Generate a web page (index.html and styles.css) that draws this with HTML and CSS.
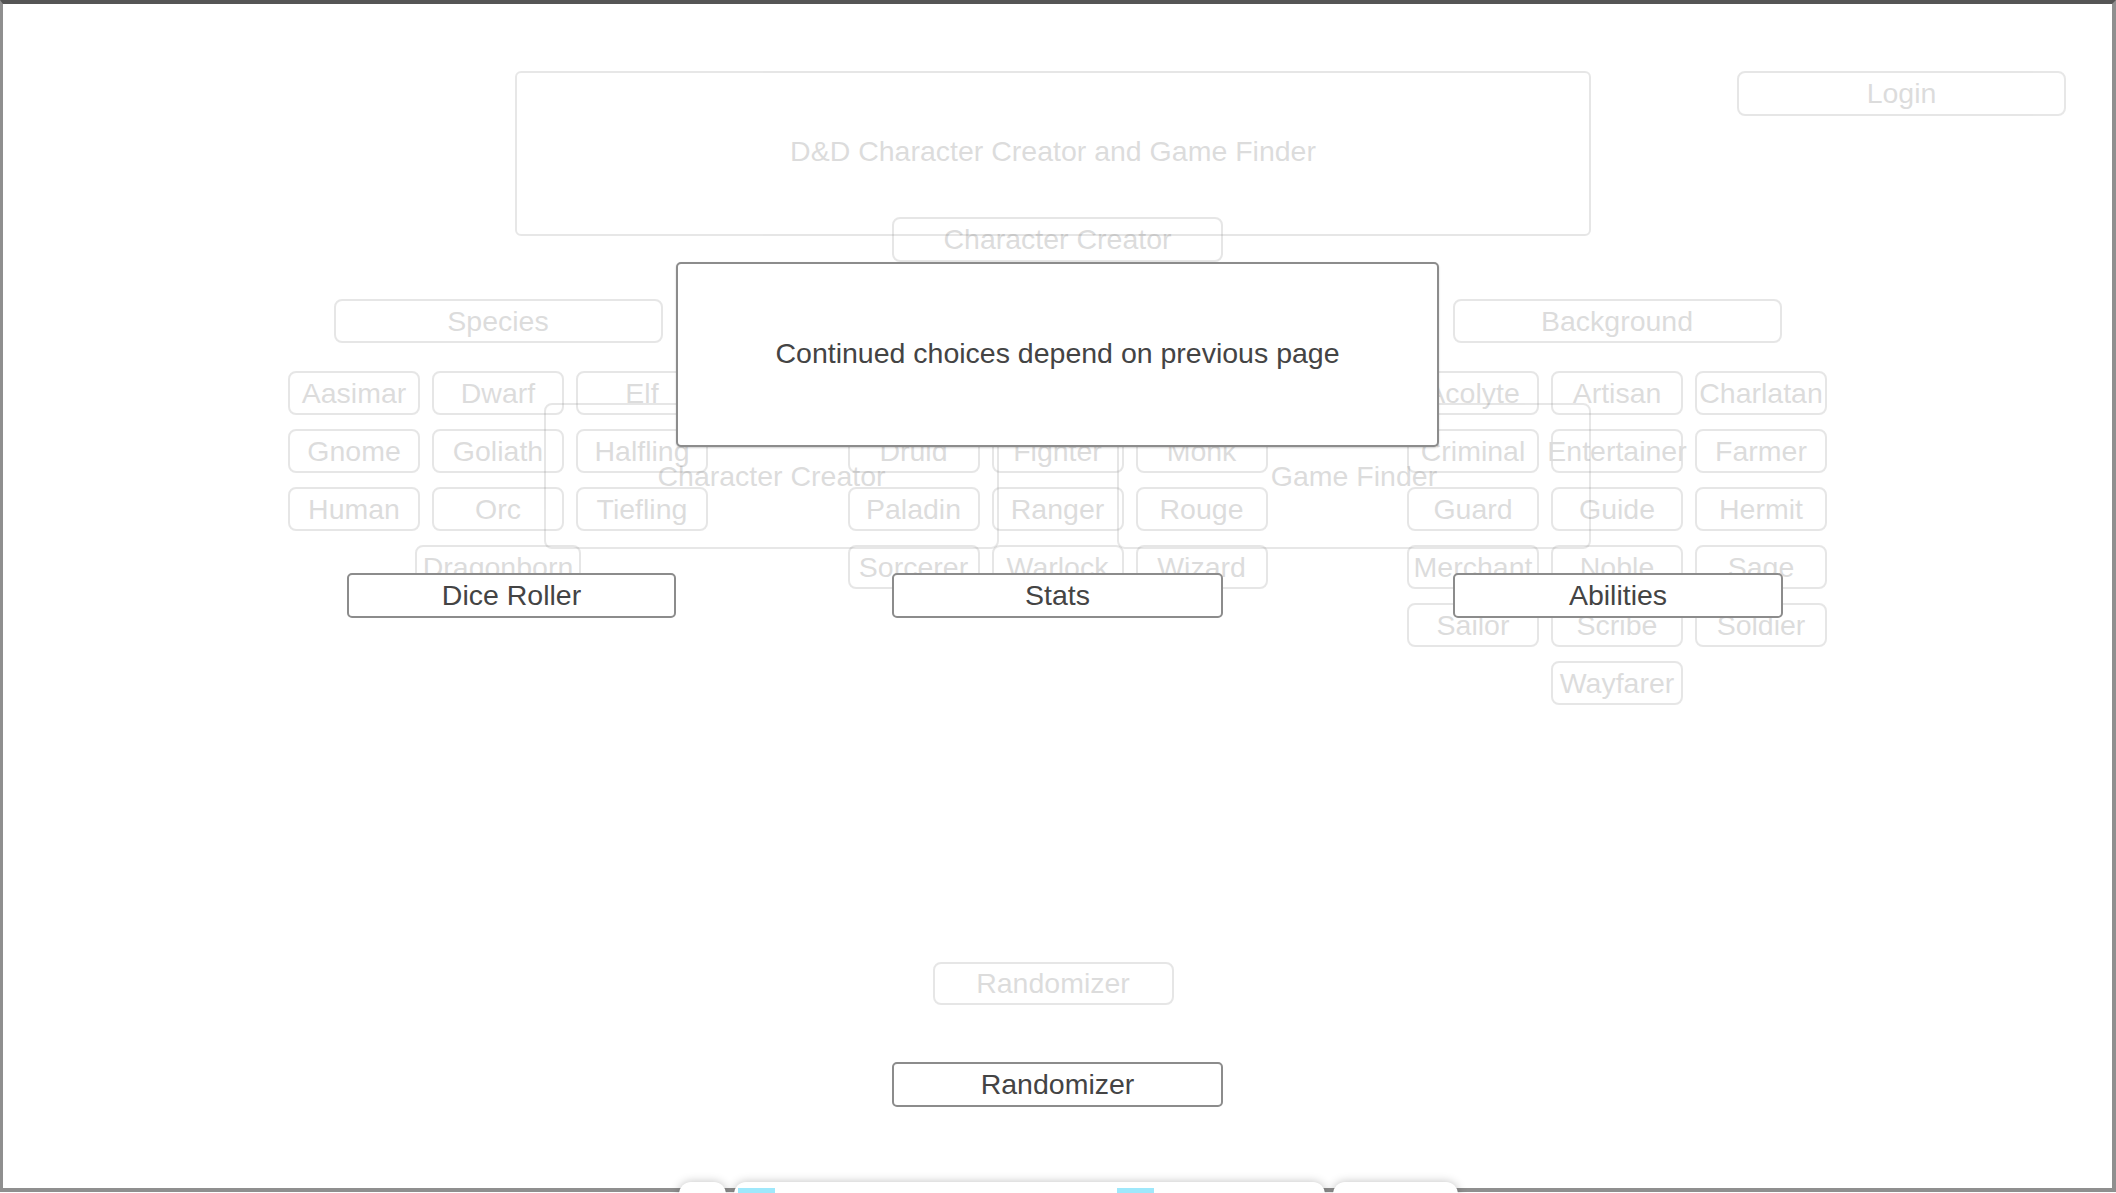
FILE: index.html
```html
<!DOCTYPE html>
<html lang="en">
<head>
    <meta charset="UTF-8">
    <meta name="viewport" content="width=device-width, initial-scale=1.0">
    <title>D&amp;D Character Creator - Continued</title>
    <link rel="stylesheet" href="styles.css">
</head>
<body>

<div class="frame">

    <!-- Ghost of the home page -->
    <div class="layer ghost home">
        <div class="home-top">
            <div class="title-box">D&amp;D Character Creator and Game Finder</div>
            <div class="btn login">Login</div>
        </div>
        <div class="home-nav">
            <div class="nav-card">Character Creator</div>
            <div class="nav-card finder">Game Finder</div>
        </div>
        <div class="btn rand">Randomizer</div>
    </div>

    <!-- Ghost of the first creator page -->
    <div class="layer ghost creator">
        <div class="btn tab">Character Creator</div>
        <div class="columns">
            <section class="col">
                <div class="btn col-head">Species</div>
                <div class="chips">
                    <div class="btn chip">Aasimar</div>
                    <div class="btn chip">Dwarf</div>
                    <div class="btn chip">Elf</div>
                    <div class="btn chip">Gnome</div>
                    <div class="btn chip">Goliath</div>
                    <div class="btn chip">Halfling</div>
                    <div class="btn chip">Human</div>
                    <div class="btn chip">Orc</div>
                    <div class="btn chip">Tiefling</div>
                    <div class="btn chip wide">Dragonborn</div>
                </div>
            </section>
            <section class="col">
                <div class="btn col-head">Class</div>
                <div class="chips">
                    <div class="btn chip">Barbarian</div>
                    <div class="btn chip">Bard</div>
                    <div class="btn chip">Cleric</div>
                    <div class="btn chip">Druid</div>
                    <div class="btn chip">Fighter</div>
                    <div class="btn chip">Monk</div>
                    <div class="btn chip">Paladin</div>
                    <div class="btn chip">Ranger</div>
                    <div class="btn chip">Rouge</div>
                    <div class="btn chip">Sorcerer</div>
                    <div class="btn chip">Warlock</div>
                    <div class="btn chip">Wizard</div>
                </div>
            </section>
            <section class="col">
                <div class="btn col-head">Background</div>
                <div class="chips">
                    <div class="btn chip">Acolyte</div>
                    <div class="btn chip">Artisan</div>
                    <div class="btn chip">Charlatan</div>
                    <div class="btn chip">Criminal</div>
                    <div class="btn chip">Entertainer</div>
                    <div class="btn chip">Farmer</div>
                    <div class="btn chip">Guard</div>
                    <div class="btn chip">Guide</div>
                    <div class="btn chip">Hermit</div>
                    <div class="btn chip">Merchant</div>
                    <div class="btn chip">Noble</div>
                    <div class="btn chip">Sage</div>
                    <div class="btn chip">Sailor</div>
                    <div class="btn chip">Scribe</div>
                    <div class="btn chip">Soldier</div>
                    <div class="btn chip">Wayfarer</div>
                </div>
            </section>
        </div>
    </div>

    <!-- Current page -->
    <div class="layer front">
        <div class="notice">Continued choices depend on previous page</div>
        <div class="front-row">
            <div class="btn tool">Dice Roller</div>
            <div class="btn tool">Stats</div>
            <div class="btn tool abilities">Abilities</div>
        </div>
        <div class="btn tool">Randomizer</div>
    </div>

    <!-- Dock peeking in at the bottom -->
    <div class="dock">
        <div class="dock-item small"></div>
        <div class="dock-item main">
            <span class="dock-sq"></span>
            <span class="dock-sq second"></span>
        </div>
        <div class="dock-item end"></div>
    </div>
</div>

</body>
</html>
```

FILE: styles.css
```css
/* Basic Reset */
* {
    margin: 0;
    padding: 0;
    box-sizing: border-box;
}
html, body {
    width: 2116px;
    height: 1193px;
    overflow: hidden;
    background: #fff;
}
body {
    font-family: "Liberation Sans", Arial, sans-serif;
    font-size: 28.5px;
    color: #555;
}

/* Outer window */
.frame {
    position: relative;
    width: 2116px;
    height: 1192px;
    border: 3px solid #8f8f8f;
    border-top: 4px solid #555;
    border-right-width: 4px;
    border-bottom-width: 4px;
}
.layer {
    position: absolute;
    inset: 0;
    display: flex;
    flex-direction: column;
}
.ghost {
    opacity: 0.2;
}

/* Shared button box */
.btn {
    display: flex;
    justify-content: center;
    align-items: center;
    white-space: nowrap;
    border: 2px solid #888;
    border-radius: 8px;
    line-height: 1;
}

/* Home page ghost */
.home {
    padding: 67px 9px 0 0;
}
.home-top {
    display: grid;
    grid-template-columns: 1fr 1076px 1fr;
    align-items: start;
}
.title-box {
    grid-column: 2;
    height: 165px;
    display: flex;
    justify-content: center;
    align-items: center;
    padding-bottom: 4px;
    border: 2px solid #888;
    border-radius: 6px;
}
.login {
    justify-self: end;
    width: 329px;
    height: 45px;
    margin-right: 37px;
}
.home-nav {
    display: flex;
    gap: 118px;
    margin-top: 167px;
    padding-left: 541px;
}
.nav-card {
    width: 455px;
    height: 146px;
    display: flex;
    justify-content: center;
    align-items: center;
    border: 2px solid #888;
    border-radius: 8px;
}
.nav-card.finder {
    width: 474px;
}
.rand {
    width: 241px;
    height: 43px;
    margin: 413px auto 0;
}

/* Creator page ghost */
.creator {
    align-items: center;
    padding-top: 213px;
}
.tab {
    width: 331px;
    height: 45px;
}
.columns {
    display: flex;
    justify-content: center;
    align-items: flex-start;
    gap: 139.5px;
    margin-top: 37px;
}
.col {
    width: 420px;
    display: flex;
    flex-direction: column;
    align-items: center;
}
.col-head {
    width: 329px;
    height: 44px;
}
.chips {
    display: flex;
    flex-wrap: wrap;
    justify-content: center;
    gap: 14px 12px;
    width: 420px;
    margin-top: 28px;
}
.chip {
    width: 132px;
    height: 44px;
}
.chip.wide {
    width: 166px;
}

/* Current page */
.front {
    align-items: center;
    padding-top: 258px;
    color: #444;
}
.notice {
    width: 763px;
    height: 185px;
    display: flex;
    justify-content: center;
    align-items: center;
    padding-bottom: 2px;
    background: #fff;
    border: 2px solid #8c8c8c;
    border-radius: 5px;
    box-shadow: 0 1px 2px rgba(0, 0, 0, 0.2);
}
.front-row {
    align-self: stretch;
    display: flex;
    gap: 216px;
    margin-top: 126px;
    margin-bottom: 444px;
    padding-left: 344px;
}
.tool {
    width: 331px;
    height: 45px;
    background: #fff;
    border-color: #8c8c8c;
    border-radius: 5px;
}
.front-row .tool:first-child {
    width: 329px;
}
.tool.abilities {
    width: 330px;
    margin-left: 14px;
}

/* Dock */
.dock {
    position: absolute;
    top: 1178px;
    left: 676px;
    display: flex;
    gap: 8px;
}
.dock-item {
    position: relative;
    height: 44px;
    background: #fff;
    border-radius: 12px;
    box-shadow: 0 0 10px rgba(0, 0, 0, 0.25);
}
.dock-item.small {
    width: 47px;
}
.dock-item.main {
    width: 591px;
}
.dock-item.end {
    width: 125px;
}
.dock-sq {
    position: absolute;
    top: 6px;
    left: 4px;
    width: 37px;
    height: 20px;
    background: #9fe8fb;
}
.dock-sq.second {
    left: 383px;
}
```
